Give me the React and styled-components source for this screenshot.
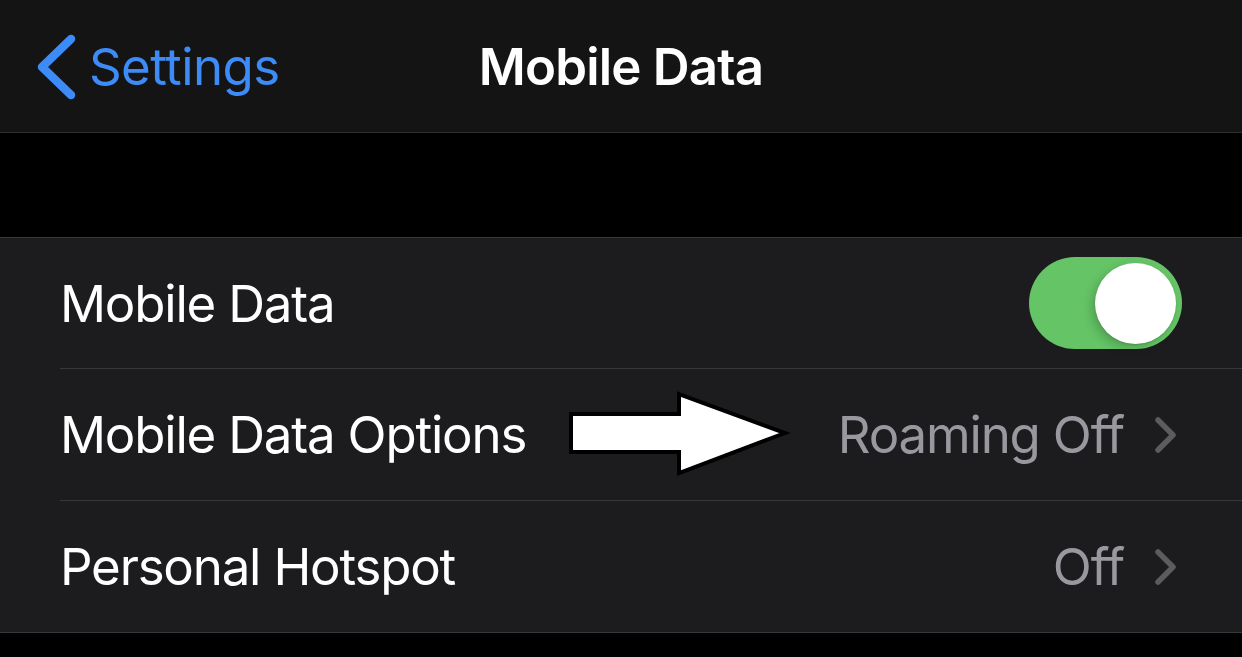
import styled, { createGlobalStyle } from "styled-components";

const GlobalStyle = createGlobalStyle`
  body {
    margin: 0;
    background: #000;
    font-family: Inter, "Noto Sans", sans-serif;
    -webkit-font-smoothing: antialiased;
  }
`;

const Screen = styled.div`
  width: 1242px;
  height: 657px;
  overflow: hidden;
  background: #000;
`;

const NavBar = styled.header`
  height: 132px;
  background: #141414;
  border-bottom: 1px solid #2e2e30;
  display: grid;
  grid-template-columns: 1fr auto 1fr;
  align-items: center;
`;

const BackButton = styled.button`
  justify-self: start;
  display: flex;
  align-items: center;
  gap: 13px;
  padding: 0 0 0 36px;
  background: none;
  border: 0;
  color: #3d8bf7;
  font-family: inherit;
  font-size: 51px;
  letter-spacing: -0.6px;
  cursor: pointer;
  svg {
    margin-top: 2px;
  }
`;

const Title = styled.h1`
  margin: 0;
  color: #fff;
  font-size: 51px;
  font-weight: 600;
  letter-spacing: -0.8px;
`;

const Gap = styled.div`
  height: 104px;
`;

const Group = styled.section`
  position: relative;
  background: #1c1c1e;
  border-top: 1px solid #38383a;
  border-bottom: 1px solid #38383a;
  padding-left: 60px;
`;

const Row = styled.div`
  height: ${(p) => (p.$first ? 130 : 131)}px;
  display: flex;
  align-items: center;
  padding-right: ${(p) => (p.$toggle ? 60 : 66)}px;
  border-bottom: ${(p) => (p.$last ? "0" : "1px solid #38383a")};
`;

const Label = styled.span`
  flex: 1;
  color: #fff;
  font-size: 51px;
  letter-spacing: -1.2px;
`;

const Detail = styled.span`
  color: #98989e;
  font-size: 51px;
  letter-spacing: -1.2px;
  margin-right: 31px;
`;

const Switch = styled.div`
  width: 153px;
  height: 92px;
  border-radius: 46px;
  background: #65c466;
  display: flex;
  align-items: center;
  justify-content: ${(p) => (p.$on ? "flex-end" : "flex-start")};
  padding: 0 6px;
  box-sizing: border-box;
`;

const Knob = styled.div`
  width: 81px;
  height: 81px;
  border-radius: 50%;
  background: #fff;
  box-shadow: -4px 4px 10px rgba(0, 0, 0, 0.18), 0 1px 2px rgba(0, 0, 0, 0.12);
`;

const Pointer = styled.svg`
  position: absolute;
  left: 565px;
  top: 150px;
`;

const Chevron = () => (
  <svg width="21" height="36" viewBox="0 0 21 36">
    <polyline
      points="3,3 18,18 3,33"
      fill="none"
      stroke="#5b5b60"
      strokeWidth="5.5"
      strokeLinecap="round"
      strokeLinejoin="round"
    />
  </svg>
);

const rows = [
  { label: "Mobile Data", toggle: true },
  { label: "Mobile Data Options", detail: "Roaming Off" },
  { label: "Personal Hotspot", detail: "Off" },
];

const App = () => {
  return (
    <Screen>
      <GlobalStyle />
      <NavBar>
        <BackButton>
          <svg width="40" height="66" viewBox="0 0 40 66">
            <polyline
              points="35,5 6,33 35,61"
              fill="none"
              stroke="#3d8bf7"
              strokeWidth="8.5"
              strokeLinecap="round"
              strokeLinejoin="round"
            />
          </svg>
          Settings
        </BackButton>
        <Title>Mobile Data</Title>
        <div />
      </NavBar>
      <Gap />
      <Group>
        {rows.map((r, i) => (
          <Row
            key={r.label}
            $toggle={r.toggle}
            $first={i === 0}
            $last={i === rows.length - 1}
          >
            <Label>{r.label}</Label>
            {r.toggle ? (
              <Switch $on>
                <Knob />
              </Switch>
            ) : (
              <>
                <Detail>{r.detail}</Detail>
                <Chevron />
              </>
            )}
          </Row>
        ))}
        {/* annotation arrow drawn over the options row */}
        <Pointer width="230" height="92" viewBox="0 0 230 92">
          <polygon
            points="6,26 114,26 114,6 220,45 114,85 114,64 6,64"
            fill="#fff"
            stroke="#000"
            strokeWidth="4"
          />
        </Pointer>
      </Group>
    </Screen>
  );
};

export default App;
